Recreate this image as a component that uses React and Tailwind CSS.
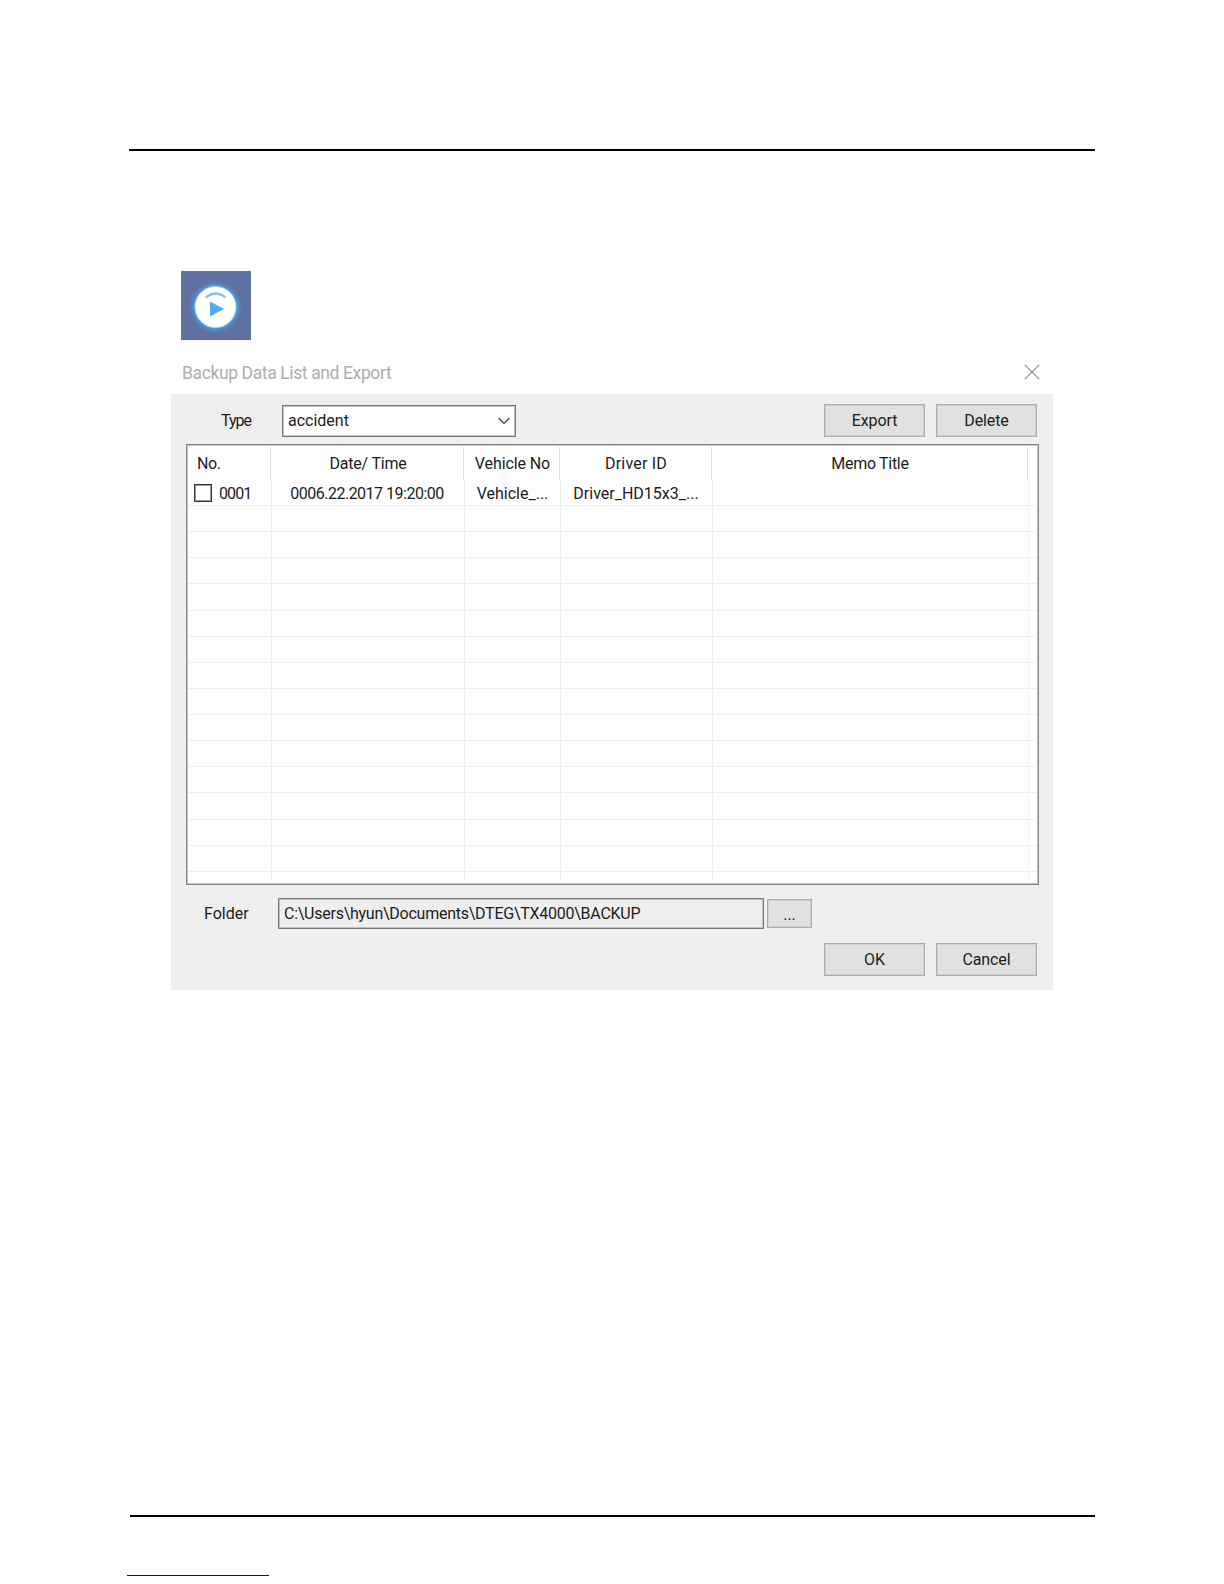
const emptyRows = Array.from({ length: 14 }, (_, i) => i);

const Button = ({ children, className = '' }) => (
  <button className={`flex items-center justify-center border border-[#adadad] bg-[#e1e1e1] tracking-[-0.1px] shadow-[inset_0_0_0_1px_#cfcfcf] ${className}`}>
    {children}
  </button>
);

const PlayIcon = () => (
  <svg className="block h-[69px] w-[70px] bg-[#5f71a1]" viewBox="0 0 70 69">
    <defs>
      <radialGradient id="glow">
        <stop offset="0.72" stopColor="#48a9ee" />
        <stop offset="0.83" stopColor="#5689c8" stopOpacity="0.75" />
        <stop offset="1" stopColor="#5f71a1" stopOpacity="0" />
      </radialGradient>
    </defs>
    <circle cx="34.5" cy="36" r="28" fill="url(#glow)" />
    <circle cx="34.5" cy="36" r="20.5" fill="#fff" stroke="#a9dcfa" strokeWidth="0.8" />
    <path d="M25 26.5Q34.5 18.5 44.5 26.5" fill="none" stroke="#83c0e8" strokeWidth="2.3" />
    <path d="M29 30.5L43 38L29 45.5Z" fill="#4eaceb" />
  </svg>
);

const DataTable = () => (
  <div className="ml-[15px] mt-[7px] flex h-[441px] w-[853px] flex-col border border-[#868686] bg-white pt-[2px] shadow-[inset_0_0_0_1px_#c4c4c4]">
    {/* Column titles */}
    <div className="grid h-[33px] grid-cols-[84px_193px_96px_152px_316px] text-center leading-[33px]">
      <div className="border-r border-[#dedede] pl-[10px] text-left tracking-[-0.4px]">No.</div>
      <div className="border-r border-[#dedede] pl-0.5 tracking-[-0.2px]">Date/ Time</div>
      <div className="border-r border-[#dedede] pl-0.5 tracking-[-0.1px]">Vehicle No</div>
      <div className="border-r border-[#dedede] pl-px tracking-[0.2px]">Driver ID</div>
      <div className="border-r border-[#dedede] pl-px tracking-[-0.3px]">Memo Title</div>
    </div>

    {/* Rows */}
    <div className="ml-px w-[849px]">
      <div className="grid h-[26px] grid-cols-[84px_193px_96px_152px_316px_8px] border-b border-[#eeeeee] text-center leading-[26px]">
        <div className="flex items-start border-r border-[#eeeeee] pl-[6px]">
          <span className="mt-[4px] h-[18px] w-[18px] border border-[#333] bg-white shadow-[inset_0_0_0_1px_#999]" />
          <span className="ml-[7px] pt-px tracking-[-0.9px]">0001</span>
        </div>
        <div className="border-r border-[#eeeeee] pr-0.5 pt-px tracking-[-0.5px]">0006.22.2017 19:20:00</div>
        <div className="border-r border-[#eeeeee] pt-px">Vehicle_...</div>
        <div className="border-r border-[#eeeeee] pr-px pt-px">Driver_HD15x3_...</div>
        <div className="border-r border-[#f2f2f2]" />
      </div>
      {emptyRows.map((row) => (
        <div key={row} className="grid h-[26.14px] grid-cols-[84px_193px_96px_152px_316px_8px] border-b border-[#eeeeee]">
          <div className="border-r border-[#eeeeee]" />
          <div className="border-r border-[#eeeeee]" />
          <div className="border-r border-[#eeeeee]" />
          <div className="border-r border-[#eeeeee]" />
          <div className="border-r border-[#f2f2f2]" />
        </div>
      ))}
      <div className="grid h-[8px] grid-cols-[84px_193px_96px_152px_316px_8px]">
        <div className="border-r border-[#eeeeee]" />
        <div className="border-r border-[#eeeeee]" />
        <div className="border-r border-[#eeeeee]" />
        <div className="border-r border-[#eeeeee]" />
        <div className="border-r border-[#f2f2f2]" />
      </div>
    </div>
  </div>
);

const BackupDialog = () => (
  <div className="ml-[171px] mt-[12px] w-[882px] text-[16px] text-[#1c1c1c]">
    <div className="flex h-[42px] items-center justify-between pl-[11px] pr-[13px]">
      <h1 className="text-[17.5px] tracking-[-0.38px] text-[#adadad]">Backup Data List and Export</h1>
      <svg className="mb-0.5 h-4 w-4" viewBox="0 0 16 16" fill="none" stroke="#999" strokeWidth="1.3">
        <path d="M1 1L15 15M15 1L1 15" />
      </svg>
    </div>

    <div className="h-[596px] bg-[#efefef] pt-[10px]">
      <div className="flex h-[33px] items-center">
        <span className="ml-[50px] w-[61px] tracking-[-1px]">Type</span>
        <div className="flex h-[32px] w-[234px] items-center justify-between border border-[#7a7a7a] bg-white px-[5px] shadow-[inset_0_0_0_1px_#c4c4c4]">
          <span>accident</span>
          <svg className="h-2 w-3" viewBox="0 0 12 8" fill="none" stroke="#555" strokeWidth="1.4">
            <path d="M0.5 1L6 6.5L11.5 1" />
          </svg>
        </div>
        <Button className="ml-[308px] h-[33px] w-[101px]">Export</Button>
        <Button className="ml-[11px] h-[33px] w-[101px]">Delete</Button>
      </div>

      <DataTable />

      <div className="mt-[13px] flex h-[31px] items-center">
        <span className="ml-[33px] w-[74px]">Folder</span>
        <div className="flex h-[31px] w-[486px] items-center border border-[#7a7a7a] pl-[5px] tracking-[-0.25px] shadow-[inset_0_0_0_1px_#c0c0c0]">
          {'C:\\Users\\hyun\\Documents\\DTEG\\TX4000\\BACKUP'}
        </div>
        <Button className="ml-[3px] h-[29px] w-[45px] pt-[3px]">...</Button>
      </div>

      <div className="mt-[14px] flex">
        <Button className="ml-[653px] h-[33px] w-[101px]">OK</Button>
        <Button className="ml-[11px] h-[33px] w-[101px]">Cancel</Button>
      </div>
    </div>
  </div>
);

export default function App() {
  return (
    <div className="flex h-[1584px] w-[1224px] flex-col overflow-hidden bg-white font-['Roboto',sans-serif]">
      <div className="ml-[129px] mt-[149px] h-[2px] w-[966px] shrink-0 bg-black" />
      <div className="ml-[181px] mt-[120px]">
        <PlayIcon />
      </div>
      <BackupDialog />
      <div className="ml-[130px] mt-[525px] h-[2px] w-[965px] shrink-0 bg-black" />
      <div className="ml-[127px] mt-[58px] h-px w-[142px] shrink-0 bg-[#120b8c]" />
    </div>
  );
}
